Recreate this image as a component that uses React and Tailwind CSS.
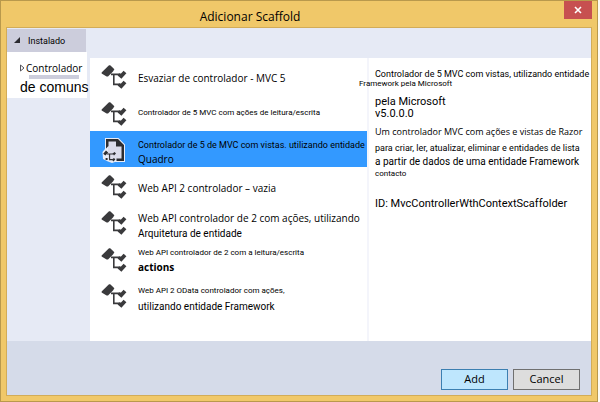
const scaffolds = [
  { id: 'mvc5-empty', lines: [{ text: 'Esvaziar de controlador - MVC 5', style: 'text-[10px] leading-7' }] },
  {
    id: 'mvc5-rw',
    lines: [{ text: 'Controlador de 5 MVC com ações de leitura/escrita', style: 'text-[8px] leading-6 font-[Roboto,sans-serif]' }],
  },
  {
    id: 'mvc5-views',
    selected: true,
    lines: [
      { text: 'Controlador de 5 de MVC com vistas. utilizando entidade', style: 'text-[9px] leading-4 font-[Roboto,sans-serif]' },
      { text: 'Quadro', style: 'text-[10px] leading-3' },
    ],
  },
  { id: 'api2-empty', lines: [{ text: 'Web API 2 controlador – vazia', style: 'text-[10px] leading-7' }] },
  {
    id: 'api2-actions-ef',
    lines: [
      { text: 'Web API controlador de 2 com ações, utilizando', style: 'text-[10px] leading-4' },
      { text: 'Arquitetura de entidade', style: 'text-[10px] leading-4 font-[Roboto,sans-serif]' },
    ],
  },
  {
    id: 'api2-rw',
    lines: [
      { text: 'Web API controlador de 2 com a leitura/escrita', style: 'text-[8px] leading-3 font-[Roboto,sans-serif]' },
      { text: 'actions', style: 'text-[10px] leading-4 font-bold' },
    ],
  },
  {
    id: 'api2-odata',
    lines: [
      { text: 'Web API 2 OData controlador com ações,', style: 'text-[8px] leading-4 font-[Roboto,sans-serif]' },
      { text: 'utilizando entidade Framework', style: 'text-[10px] leading-4 font-[Roboto,sans-serif]' },
    ],
  },
];

function ControllerIcon() {
  return (
    <svg viewBox="0 0 26 24" className="mt-[2px] h-6 w-[26px] shrink-0" fill="#3a3a3c" aria-hidden="true">
      <path d="M8 .2H9.2L13.4 4.2 12 6.4 7 11.6 5.6 11.4 .6 8.6V7.6Z" />
      <path d="M16.6 10.4 18 8.6 20 8.4 22.6 5.8 25.4 8.2 20.4 13.8Z" />
      <path d="M16.6 20.4 18 18.6 20 18.4 22.6 15.8 25.4 18.2 20.4 23.8Z" />
      <path d="M10 9.4H19M12.8 9V19.4H19" fill="none" stroke="#3a3a3c" strokeWidth="1.6" />
    </svg>
  );
}

function ViewIcon() {
  return (
    <svg viewBox="0 0 26 28" className="h-7 w-[26px] shrink-0" aria-hidden="true">
      <path d="M4 3H17.5L24 9.5V27H14L11 28 7 26.5 2 24 1.5 17 4 14Z" fill="#e9edf8" />
      <path d="M7 6H15V11H20.5V24H7Z" fill="#dcdcea" />
      <path d="M5 4H17L23 10V26H15.5V23.5H20.5V11.5H15V6.5H7.5V11L5 13.5Z" fill="#2d2d30" />
      <path d="M5 15.5 7.2 17.4 4.4 20.6 2.2 18.8Z" fill="#2d2d30" />
      <path d="M11.5 18.6 13.6 17 15 18.4 13 20.6ZM10.8 24.6 13 23 14.4 24.4 12.4 26.6Z" fill="#2d2d30" />
      <path d="M6 19H12M8.6 19V24.6H11.4" fill="none" stroke="#2d2d30" strokeWidth="1.1" />
      <path d="M4.6 23H6.6V25H4.6Z" fill="#2d2d30" />
    </svg>
  );
}

export default function App() {
  return (
    <div className="h-screen bg-[#fdfbf3] pr-[2px] font-[Roboto,'Segoe_UI',sans-serif] text-black">
      <div className="flex h-full flex-col border border-[#b9994c] bg-[#f0c869] px-[5px] pb-[5px]">
        <header className="flex h-[26px] shrink-0 items-start">
          <h1 className="flex-1 pt-[6px] pr-[96px] pl-[26px] text-center font-['Open_Sans','Segoe_UI',sans-serif] text-[12px] leading-5">
            Adicionar Scaffold
          </h1>
          <button aria-label="Fechar" className="flex h-[18px] w-7 items-center justify-center bg-[#c75050]">
            <svg viewBox="0 0 8 8" className="h-2 w-2" stroke="white" strokeWidth="1.6" aria-hidden="true">
              <path d="M1 1 7 7M7 1 1 7" />
            </svg>
          </button>
        </header>

        <main className="flex min-h-0 flex-1 flex-col border border-[#d2ac58] bg-[#e6eaf5]">
          <div className="flex min-h-0 flex-1">
            <nav className="w-[83px] shrink-0 pt-px">
              <button className="flex h-[23px] w-[79px] items-center bg-[#cccddc] pt-[2px] pl-[7px] text-left text-[9px]">
                <svg viewBox="0 0 6 6" className="mr-2 mb-1 h-[6px] w-[6px]" fill="#2b2b30" aria-hidden="true">
                  <path d="M6 0V6H0Z" />
                </svg>
                Instalado
              </button>
              <button className="block h-[46px] w-20 bg-white pl-[13px] text-left whitespace-nowrap">
                <span className="flex h-5 items-center pt-[6px] font-['Open_Sans',sans-serif] text-[10px]">
                  <svg viewBox="0 0 5 8" className="mr-px h-2 w-[5px]" fill="white" stroke="#55555c" aria-hidden="true">
                    <path d="M.5 1 4 4 .5 7Z" />
                  </svg>
                  Controlador
                </span>
                <span className="ml-[9px] block h-1 w-[50px] bg-[#cccddc]" />
                <span className="block font-['Liberation_Sans',sans-serif] text-[14px] leading-4">de comuns</span>
              </button>
            </nav>

            <div className="mt-[30px] flex min-w-0 flex-1 bg-white">
              <ul className="min-w-0 flex-[277]">
                {scaffolds.map((item) => (
                  <li key={item.id} className="odd:mb-px">
                    <button
                      className={
                        item.selected
                          ? 'flex h-9 w-full items-center bg-[#3399ff] pl-[11px] text-left whitespace-nowrap'
                          : 'flex h-9 w-full items-center pl-[11px] text-left whitespace-nowrap'
                      }
                    >
                      {item.selected ? <ViewIcon /> : <ControllerIcon />}
                      <span className="ml-[11px] self-start pt-[6px] font-['Open_Sans',sans-serif]">
                        {item.lines.map((line) => (
                          <span key={line.text} className={`block ${line.style}`}>
                            {line.text}
                          </span>
                        ))}
                      </span>
                    </button>
                  </li>
                ))}
              </ul>
              <section className="min-w-0 flex-[216] border-l-2 border-[#f4f5fb] pt-[10px] pl-[6px] whitespace-nowrap">
                <h2 className="text-[9px] leading-3">Controlador de 5 MVC com vistas, utilizando entidade</h2>
                <p className="-ml-4 text-[8px] leading-2">Framework pela Microsoft</p>
                <p className="mt-2 text-[11px] leading-3">pela Microsoft</p>
                <p className="text-[11px] leading-3">v5.0.0.0</p>
                <p className="mt-1 font-['Open_Sans',sans-serif] text-[9px] leading-4">
                  Um controlador MVC com ações e vistas de Razor
                </p>
                <p className="text-[9px] leading-4">para criar, ler, atualizar, eliminar e entidades de lista</p>
                <p className="text-[10px] leading-3">a partir de dados de uma entidade Framework</p>
                <p className="text-[8px] leading-3">contacto</p>
                <p className="mt-4 text-[11px] leading-4">ID: MvcControllerWthContextScaffolder</p>
              </section>
            </div>
          </div>

          <footer className="flex h-[54px] shrink-0 items-end justify-end gap-[5px] bg-[#d5dbe9] pr-[11px] pb-[5px] font-['Open_Sans','Segoe_UI',sans-serif] text-[11px]">
            <button className="h-[21px] w-[67px] border border-[#3c7fb1] bg-[#bee6fd]">Add</button>
            <button className="h-[21px] w-[67px] border border-[#707070] bg-[#dddddd]">Cancel</button>
          </footer>
        </main>
      </div>
    </div>
  );
}
